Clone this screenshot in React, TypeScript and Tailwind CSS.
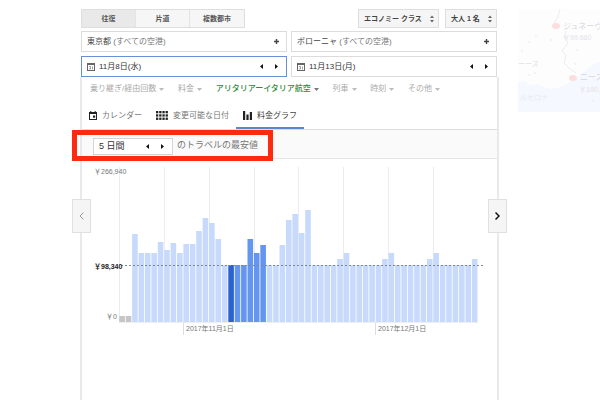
import { useState } from "react"
import clsx from "clsx"

const TRIP_TYPES = ["往復", "片道", "複数都市"]

const FILTERS = [
  { label: "乗り継ぎ/経由回数", active: false },
  { label: "料金", active: false },
  { label: "アリタリアーイタリア航空", active: true },
  { label: "列車", active: false },
  { label: "時刻", active: false },
  { label: "その他", active: false },
]

// Bar heights, one per departure day
const BASE = 57
const FARES = [
  6, 6, 88, 69, 69, 69, 80, 72, 79, 69, 78, 78, 91, 104, 99, 83, BASE,
  BASE, BASE, BASE, 83, 69, 77, BASE, BASE, 77, 102, 108, 89, 112,
  BASE, BASE, BASE, BASE, 63, 69, BASE, BASE, BASE, BASE, BASE, 63, 69,
  BASE, BASE, BASE, BASE, BASE, 63, 69, BASE, BASE, BASE, BASE, BASE, 63,
]
const PITCH = 6.41
const LEFT = 37
const BOTTOM = 163
const SELECTED = 17

function barColor(i: number) {
  if (i < 2) return "#c6c6c6"
  if (i === SELECTED) return "#2a62d0"
  if (i > SELECTED && i <= SELECTED + 5) return "#6496f0"
  return "#c8dafc"
}

function DateIcon() {
  return (
    <svg viewBox="0 0 8 8" className="h-2 w-2 shrink-0" fill="none" stroke="#666">
      <rect x="0.5" y="0.5" width="7" height="7" />
      <path d="M0.5 1.5h7" />
      <path d="M2 3.5h1.5v2.500h-1.500M5.500 3.500v3" strokeWidth="0.6" />
    </svg>
  )
}

function Steppers({ label }: { label: string }) {
  return (
    <div className="flex shrink-0 gap-3">
      <button type="button" aria-label={`${label} 前へ`}>
        <svg viewBox="0 0 3 5" className="h-[5px] w-[3px]"><path d="M3 0v5L0 2.500z" fill="#111" /></svg>
      </button>
      <button type="button" aria-label={`${label} 次へ`}>
        <svg viewBox="0 0 3 5" className="h-[5px] w-[3px]"><path d="M0 0v5L3 2.500z" fill="#111" /></svg>
      </button>
    </div>
  )
}

function PlaceField({ name }: { name: string }) {
  return (
    <button
      type="button"
      className="flex h-[21px] items-center justify-between border border-[#dcdcdc] bg-white pl-[5px] pr-[7px] text-[#444]"
    >
      <span>
        {name} <span className="text-[#777]">(すべての空港)</span>
      </span>
      <svg viewBox="0 0 5 5" className="h-[5px] w-[5px]"><path d="M2.500 0v5M0 2.500h5" stroke="#444" strokeWidth="1.400" /></svg>
    </button>
  )
}

function DateField({ label, value, focused }: { label: string; value: string; focused?: boolean }) {
  return (
    <div
      className={clsx(
        "flex h-[21px] items-center gap-1 border bg-white pl-[5px] pr-2",
        focused ? "border-[#6a8fd6]" : "border-[#dcdcdc]",
      )}
    >
      <DateIcon />
      <input aria-label={label} defaultValue={value} className="min-w-0 flex-1 text-[#333] outline-none" />
      <Steppers label={label} />
    </div>
  )
}

function HeaderSelect({ label, value }: { label: string; value: string }) {
  return (
    <label className="relative block h-[19px] border border-[#dedede] bg-[#f5f5f5]">
      <select
        aria-label={label}
        className="h-full appearance-none pl-[5px] pr-4 text-[7px] font-bold text-[#444] outline-none"
      >
        <option>{value}</option>
      </select>
      <svg viewBox="0 0 4 8" className="pointer-events-none absolute right-1 top-[5px] h-2 w-1" fill="#666">
        <path d="M0 3L2 0.500L4 3zM0 5L2 7.500L4 5z" />
      </svg>
    </label>
  )
}

function CalendarIcon() {
  return (
    <svg viewBox="0 0 8 9" className="h-[9px] w-2">
      <path d="M0 1h1.300V0h1v1h3.400V0h1v1H8v8H0zM1 3v5h6V3z" fill="#222" fillRule="evenodd" />
      <rect x="4" y="4.500" width="2.200" height="2.200" fill="#222" />
    </svg>
  )
}

function GridIcon() {
  return (
    <svg viewBox="0 0 12 9" className="h-[9px] w-3" fill="#222">
      {[0, 3.3, 6.6].map((y) =>
        [0, 3.2, 6.4, 9.6].map((x) => <rect key={`${x}-${y}`} x={x} y={y} width="2.300" height="2.300" />),
      )}
    </svg>
  )
}

function BarsIcon() {
  return (
    <svg viewBox="0 0 9 9" className="h-[9px] w-[9px]" fill="#222">
      <path d="M0 0h2.200v9H0zM3.400 3.500h2.200V9H3.400zM6.800 1H9v8H6.800z" />
    </svg>
  )
}

const TABS = [
  { label: "カレンダー", icon: CalendarIcon },
  { label: "変更可能な日付", icon: GridIcon },
  { label: "料金グラフ", icon: BarsIcon },
]

function FareChart() {
  return (
    <svg viewBox="0 0 415 180" className="block w-full" fontSize="7" fill="#777">
      {/* Week lines */}
      {Array.from({ length: 8 }, (_, i) => (
        <rect key={i} x={Math.round(LEFT + i * 7 * PITCH)} y="8" width="1" height={BOTTOM - 8} fill="#ececec" />
      ))}
      {FARES.map((h, i) => (
        <rect key={i} x={LEFT + i * PITCH + 0.3} y={BOTTOM - h} width={PITCH - 0.8} height={h} fill={barColor(i)} />
      ))}
      <path d={`M${LEFT} ${BOTTOM + 0.5}H396`} stroke="#eee" />
      <path d="M39 106.500H403" stroke="#7d879a" strokeDasharray="2 2" />
      <path d="M101.500 164v12M293.500 164v12" stroke="#ddd" />
      <text x="12" y="15">￥266,940</text>
      <text x="12" y="110" fontWeight="bold" fill="#222">￥98,340</text>
      <text x="24" y="160">￥0</text>
      <text x="104" y="172">2017年11月1日</text>
      <text x="296" y="172">2017年12月1日</text>
    </svg>
  )
}

function MiniMap() {
  return (
    <svg viewBox="0 0 82 103" className="h-[103px] w-full" preserveAspectRatio="xMinYMin slice" fontSize="8">
      <rect width="82" height="103" fill="#fdfdfe" />
      <path d="M0 73L6 72L12 76L20 75L26 78L34 80L42 78L50 74L58 70L64 64L70 60L76 55L82 53V103H0z" fill="#f5f8fe" />
      <path d="M42 0L40 8L36 14M48 22L46 28L50 34L44 42L48 46L46 54L52 60L58 64" fill="none" stroke="#ececf0" />
      <g fill="#f1eef3">
        <circle cx="18" cy="27" r="1" /><circle cx="11" cy="33" r="1" /><circle cx="33" cy="31" r="1" />
        <circle cx="4" cy="42" r="1" /><circle cx="17" cy="64" r="1" /><circle cx="11" cy="66" r="1" />
        <circle cx="59" cy="41" r="1" /><circle cx="57" cy="55" r="1" /><circle cx="75" cy="92" r="1" />
      </g>
      <ellipse cx="38" cy="17" rx="4" ry="3" fill="#fbdede" />
      <ellipse cx="55" cy="69" rx="4" ry="3" fill="#fbdede" />
      <g fill="#d6d7dc">
        <text x="45" y="20">ジュネーヴ</text>
        <text x="62" y="71">ニース</text>
      </g>
      <g fill="#e2e2e7" fontSize="7">
        <text x="45" y="31">￥99,660</text>
        <text x="61" y="83">￥100,0</text>
        <text x="0" y="57">ーース</text>
        <text x="2" y="91" fill="#e8eaf2">ルセロナ</text>
      </g>
    </svg>
  )
}

export default function App() {
  const [trip, setTrip] = useState(0)
  const [tab, setTab] = useState(2)

  return (
    <div className="flex min-h-screen bg-white pl-20 font-['Liberation_Sans','Noto_Sans_CJK_JP',sans-serif] text-[8px] leading-3">
      <main className="flex min-w-0 flex-1 flex-col pt-[9px]">
        <header className="pl-px pr-[2px]">
          <div className="flex items-center justify-between">
            <div className="grid h-[19px] w-[164px] grid-cols-3 border border-[#dedede]">
              {TRIP_TYPES.map((label, i) => (
                <button
                  key={label}
                  type="button"
                  onClick={() => setTrip(i)}
                  className={clsx(
                    "border-r border-[#e4e4e4] text-[7px] font-bold text-[#555] last:border-r-0",
                    trip === i ? "bg-[#e9e9e9]" : "bg-[#f6f6f6]",
                  )}
                >
                  {label}
                </button>
              ))}
            </div>
            <div className="flex gap-[6px]">
              <HeaderSelect label="座席クラス" value="エコノミー クラス" />
              <HeaderSelect label="人数" value="大人 1 名" />
            </div>
          </div>
          <div className="mt-[3px] grid grid-cols-2 gap-x-1 gap-y-1">
            <PlaceField name="東京都" />
            <PlaceField name="ボローニャ" />
            <DateField label="出発日" value="11月8日(水)" focused />
            <DateField label="帰着日" value="11月13日(月)" />
          </div>
        </header>

        <section className="relative flex-1 border-x-2 border-[#e9e9e9]">
          <div className="flex h-6 items-center justify-between pl-2 pr-[57px]">
            {FILTERS.map((f) => (
              <button
                key={f.label}
                type="button"
                className={clsx("flex items-center gap-[3px]", f.active ? "font-medium text-[#2f8a3a]" : "text-[#aaa]")}
              >
                {f.label}
                <svg
                  viewBox="0 0 5 3"
                  className={clsx("h-[3px] w-[5px]", f.active ? "text-[#777]" : "text-[#bbb]")}
                >
                  <path d="M0 0h5L2.500 3z" fill="currentColor" />
                </svg>
              </button>
            ))}
          </div>

          <nav className="flex h-[29px] border-b border-[#dcdcdc]">
            {TABS.map(({ label, icon: Icon }, i) => (
              <button
                key={label}
                type="button"
                onClick={() => setTab(i)}
                className={clsx(
                  "flex items-center gap-[5px] border-b-2 px-[7px] pt-[3px]",
                  tab === i ? "border-[#5b85cf] text-[#444]" : "border-transparent text-[#777]",
                )}
              >
                <Icon />
                {label}
              </button>
            ))}
          </nav>

          <div className="relative flex h-[29px] items-center gap-1 border-b border-[#e6e6e6] bg-[#fafafa] pl-[11px] pt-[2px] text-[9px]">
            <div className="mt-[2px] flex h-[17px] w-20 items-center border border-[#d4d4d4] bg-white pl-[5px] pr-2">
              <input aria-label="旅行期間" defaultValue="5 日間" className="min-w-0 flex-1 text-[#333] outline-none" />
              <Steppers label="旅行期間" />
            </div>
            <span className="text-[#777]">のトラベルの最安値</span>
            <div className="pointer-events-none absolute -left-[10px] top-0 h-[31px] w-[201px] border-[5px] border-[#fb2a10]" />
          </div>

          <FareChart />

          <button
            type="button"
            aria-label="前の期間"
            className="absolute -left-[10px] top-[122px] flex h-[34px] w-[19px] items-center justify-center border border-[#e0e0e0] bg-[#f5f5f5]"
          >
            <svg viewBox="0 0 5 8" className="h-2 w-[5px]" fill="none"><path d="M4.500 0.500L1 4L4.500 7.500" stroke="#999" /></svg>
          </button>
          <button
            type="button"
            aria-label="次の期間"
            className="absolute -right-[10px] top-[122px] flex h-[34px] w-[19px] items-center justify-center border border-[#e0e0e0] bg-[#f5f5f5]"
          >
            <svg viewBox="0 0 5 8" className="h-2 w-[5px]" fill="none"><path d="M0.500 0.500L4 4L0.500 7.500" stroke="#111" strokeWidth="1.500" /></svg>
          </button>
        </section>
      </main>

      <aside className="ml-[19px] w-[82px] shrink-0 pt-[9px]">
        <MiniMap />
      </aside>
    </div>
  )
}
